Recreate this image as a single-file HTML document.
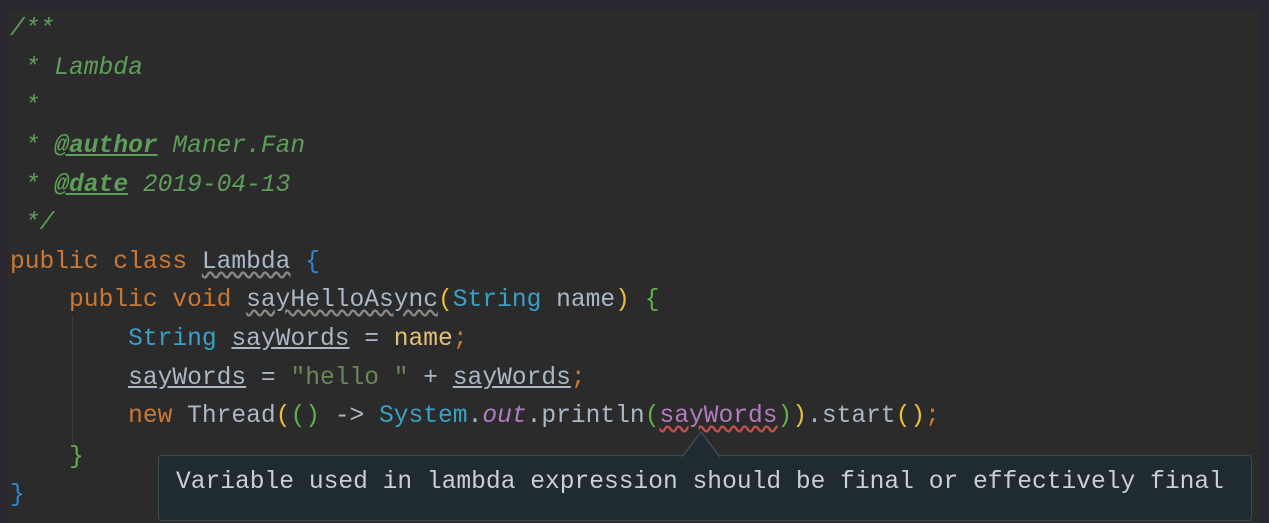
<!DOCTYPE html>
<html><head><meta charset="utf-8"><style>
html,body{margin:0;padding:0;background:#2a2630;width:1269px;height:523px;overflow:hidden}
#ed{position:absolute;left:8px;top:10px;width:1252px;height:513px;background:#2b2b2b}
.l{position:absolute;left:10px;font-family:"Liberation Mono",monospace;font-size:24.6px;white-space:pre;color:#a9b7c6;line-height:30px}
.c{color:#5f9e5a;font-style:italic}
.t{text-decoration:underline;font-weight:bold;font-style:italic}
.k{color:#cc7832}.s{color:#3b9fc6}.g{color:#6a8759}.y{color:#e8bf3a}.gr{color:#5fb14a}.b{color:#2f87d6}.p{color:#b27cc0}
.u{text-decoration:underline}
.w{text-decoration:underline wavy #888;text-underline-offset:3px}
.r{text-decoration:underline wavy #c0504d;text-underline-offset:3px}
#tip{position:absolute;left:158px;top:455px;width:1092px;height:64px;background:#1f2a31;border:1.5px solid #3e4a52;border-radius:4px}
#tt{position:absolute;left:176px;top:469px;font-family:"Liberation Mono",monospace;font-size:24.6px;color:#c9cfd3;white-space:pre}
</style></head><body>
<div id="ed"></div>
<div style="position:absolute;left:72px;top:316px;width:1px;height:130px;background:#3a3a3a"></div>
<div class="l c" style="top:15px">/**</div>
<div class="l c" style="top:54px"> * Lambda</div>
<div class="l c" style="top:92px"> *</div>
<div class="l c" style="top:132px"> * <span class="t">@author</span> Maner.Fan</div>
<div class="l c" style="top:171px"> * <span class="t">@date</span> 2019-04-13</div>
<div class="l c" style="top:209px"> */</div>
<div class="l" style="top:248px"><span class="k">public class </span><span class="w">Lambda</span> <span class="b">{</span></div>
<div class="l" style="top:286px">    <span class="k">public void </span><span class="w">sayHelloAsync</span><span class="y">(</span><span class="s">String</span> name<span class="y">)</span> <span class="gr">{</span></div>
<div class="l" style="top:325px">        <span class="s">String</span> <span class="u">sayWords</span> = <span style="color:#e3c07a">name</span><span class="k">;</span></div>
<div class="l" style="top:364px">        <span class="u">sayWords</span> = <span class="g">"hello "</span> + <span class="u">sayWords</span><span class="k">;</span></div>
<div class="l" style="top:402px">        <span class="k">new</span> Thread<span class="y">(</span><span class="gr">()</span> -&gt; <span class="s">System</span>.<span class="p" style="font-style:italic">out</span>.println<span class="gr">(</span><span class="p r">sayWords</span><span class="gr">)</span><span class="y">)</span>.start<span class="y">()</span><span class="k">;</span></div>
<div class="l gr" style="top:443px">    }</div>
<div class="l b" style="top:481px">}</div>
<div id="tip"></div>
<svg style="position:absolute;left:680px;top:430px" width="44" height="28"><path d="M2 27 L21 2 L40 27" fill="#1f2a31" stroke="#3e4a52" stroke-width="1.5"/><rect x="3" y="26" width="36" height="3" fill="#1f2a31"/></svg>
<div id="tt">Variable used in lambda expression should be final or effectively final</div>
</body></html>
